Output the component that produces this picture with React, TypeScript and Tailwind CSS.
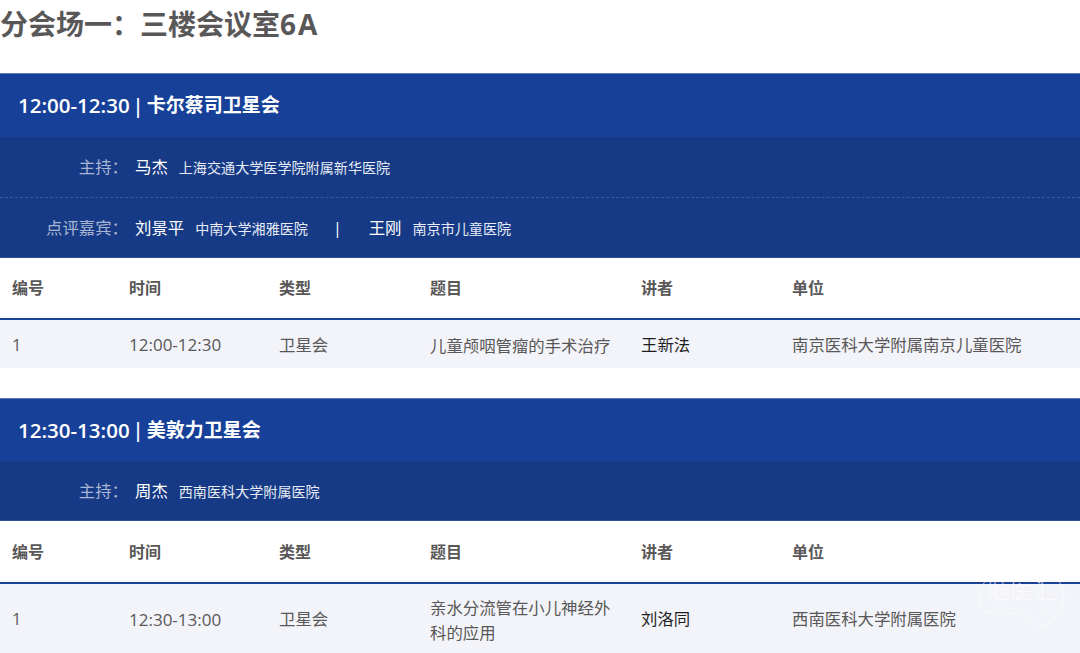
const font = { fontFamily: '"Open Sans", "Noto Sans CJK SC", sans-serif' };

type Person = { name: string; org: string };

const cols = 'grid grid-cols-[117px_150px_151px_211px_151px_1fr]';

function InfoRow({ label, people, dashed }: { label: string; people: Person[]; dashed?: boolean }) {
  return (
    <div className={`flex flex-1 items-center pt-0.5 ${dashed ? 'border-b border-dashed border-[#3a5a9c]' : ''}`}>
      <div className="w-[128px] shrink-0 text-right text-[16.4px] text-[#a9b6d3]">{label}</div>
      <div className="ml-[7px] flex items-center">
        {people.map((p, i) => (
          <div key={p.name} className="flex items-center">
            {i > 0 && <span className="mr-[27px] ml-[25px] text-base text-white">|</span>}
            <span className="text-[16.4px] text-white">{p.name}</span>
            <span className="ml-[11px] text-[14.1px] text-[#e6ebf5]">{p.org}</span>
          </div>
        ))}
      </div>
    </div>
  );
}

function Session(props: {
  time: string;
  name: string;
  titleClass: string;
  infoClass: string;
  headClass: string;
  rows: { label: string; people: Person[] }[];
  topic: string[];
  speaker: string;
  org: string;
  rowClass: string;
}) {
  return (
    <section>
      <div className={`flex ${props.titleClass} items-center border-t border-[#5b7cbc] bg-[#174099] pl-[18px] font-semibold text-white`}>
        <span className="text-[20.5px]">{props.time}</span>
        <span className="mx-[3px] text-[20px]">|</span>
        <span className="text-[19px]">{props.name}</span>
      </div>
      <div className={`flex ${props.infoClass} flex-col border-b border-[#2c4f96] bg-[#163a85]`}>
        {props.rows.map((r, i) => (
          <InfoRow key={r.label} label={r.label} people={r.people} dashed={i < props.rows.length - 1} />
        ))}
      </div>
      <div className={`${cols} ${props.headClass} items-center border-b-2 border-[#1a4297] text-base font-semibold text-[#595757]`}>
        {['编号', '时间', '类型', '题目', '讲者', '单位'].map((h) => (
          <div key={h} className="pl-3">{h}</div>
        ))}
      </div>
      <div className={`${cols} ${props.rowClass} items-center bg-[#f2f4f9] pt-0.5 text-[16.4px] text-[#595757]`}>
        <div className="pl-3">1</div>
        <div className="pl-3 text-[17px]">{props.time}</div>
        <div className="pl-3">卫星会</div>
        <div className="pl-3 leading-[25px]">
          {props.topic.map((t) => (
            <div key={t}>{t}</div>
          ))}
        </div>
        <div className="pl-3 text-[#1f1f1f]">{props.speaker}</div>
        <div className="pl-3">{props.org}</div>
      </div>
    </section>
  );
}

export default function App() {
  return (
    <div className="relative h-[653px] w-[1080px] overflow-hidden bg-white" style={font}>
      <h1 className="flex h-[73px] items-start pt-[6px] text-[28px] leading-9 font-bold text-[#595757]">
        分会场一：三楼会议室<span className="tracking-[2px]">6A</span>
      </h1>
      <Session
        time="12:00-12:30"
        name="卡尔蔡司卫星会"
        titleClass="h-16"
        infoClass="h-[121px]"
        headClass="h-[62px]"
        rows={[
          { label: '主持：', people: [{ name: '马杰', org: '上海交通大学医学院附属新华医院' }] },
          {
            label: '点评嘉宾：',
            people: [
              { name: '刘景平', org: '中南大学湘雅医院' },
              { name: '王刚', org: '南京市儿童医院' },
            ],
          },
        ]}
        topic={['儿童颅咽管瘤的手术治疗']}
        speaker="王新法"
        org="南京医科大学附属南京儿童医院"
        rowClass="h-12"
      />
      <div className="h-[30px]" />
      <Session
        time="12:30-13:00"
        name="美敦力卫星会"
        titleClass="h-[63px]"
        infoClass="h-[60px]"
        headClass="h-[63px]"
        rows={[{ label: '主持：', people: [{ name: '周杰', org: '西南医科大学附属医院' }] }]}
        topic={['亲水分流管在小儿神经外', '科的应用']}
        speaker="刘洛同"
        org="西南医科大学附属医院"
        rowClass="h-[69px]"
      />
      {/* watermark */}
      <div className="absolute top-[574px] left-[977px] h-[56px] w-[90px] text-center text-white opacity-70">
        <svg className="absolute top-1 left-0" width="90" height="52" viewBox="0 0 90 52" fill="none" stroke="white" strokeWidth="1">
          <path d="M10 2C2 8 0 22 5 30C11 38 30 33 42 36C50 38 52 44 62 48C74 49 88 32 87 18C87 10 84 5 80 2" />
        </svg>
        <div className="text-[23px] leading-[32px] font-light">脑医汇</div>
        <div className="text-[5px] leading-[7px] tracking-[2px]">NAOYIHUI.COM</div>
      </div>
    </div>
  );
}
